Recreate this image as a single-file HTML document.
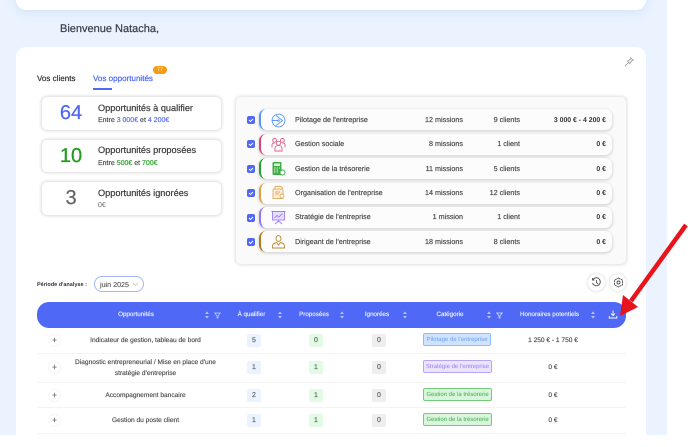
<!DOCTYPE html>
<html lang="fr"><head><meta charset="utf-8"><title>Opportunités</title>
<style>
*{box-sizing:border-box}
html,body{margin:0;padding:0;width:688px;height:435px;overflow:hidden;background:#fff;font-family:"Liberation Sans",sans-serif;color:#444;text-rendering:geometricPrecision}
.a{position:absolute}
.t{position:absolute;white-space:nowrap}
.c{transform:translateX(-50%);text-align:center}
.r{transform:translateX(-100%)}
#bg{left:0;top:0;width:667px;height:435px;background:#eaf3ff}
.stat{position:absolute;left:42px;width:179px;background:#fff;border-radius:5px;box-shadow:0 0 3px 1px rgba(0,0,0,.14)}
.row{position:absolute;left:259px;width:353px;height:21px;background:#fcfcfc;border-radius:7px;box-shadow:0 1px 2px 1px rgba(0,0,0,.12)}
.bar{position:absolute;left:259px;width:8px;height:21px;border-left:2px solid;border-radius:7px 0 0 7px}
.cb{position:absolute;left:247px;width:8px;height:8px;background:#4f68f5;border-radius:2px}
.cb svg{position:absolute;left:0;top:0}
.rt{font-size:7.2px;color:#4a4a4a;-webkit-text-stroke:.18px #4a4a4a}
.rb{font-size:6.9px;font-weight:bold;color:#333;margin-top:1px}
.hd{font-size:6.24px;color:#eef1ff;-webkit-text-stroke:.15px #eef1ff}
.cell{font-size:6.6px;color:#4a4a4a;-webkit-text-stroke:.15px #4a4a4a}
.pill{position:absolute;width:14px;height:13px;border-radius:2px;font-size:7px;text-align:center;line-height:13px;color:#666;-webkit-text-stroke:.2px #666}
.tag{position:absolute;height:13px;border:1px solid;border-radius:2px;font-size:6px;line-height:13px;text-align:center;white-space:nowrap}
.line{position:absolute;left:37px;width:589px;height:1px;background:#f3f3f3}
.plus{position:absolute;left:49px;width:11px;height:11px;border-radius:50%;background:#fff;box-shadow:0 0 2px rgba(0,0,0,.12);font-size:9px;line-height:10px;text-align:center;color:#555}
.h{font-size:9.2px;line-height:12px;color:#3a3a3a;-webkit-text-stroke:.2px #3a3a3a}
.s{font-size:7px;line-height:9px;color:#444;-webkit-text-stroke:.15px #444}
</style></head><body>
<div class="a" id="bg"></div>
<div class="a" style="left:16px;top:-20px;width:630px;height:30px;background:#fff;border-radius:10px;box-shadow:0 3px 10px rgba(150,180,230,.25)"></div>
<div class="t" style="left:60px;top:22px;font-size:11px;color:#3d4350;line-height:14px;-webkit-text-stroke:.25px #3d4350">Bienvenue Natacha,</div>
<div class="a" style="left:16px;top:47px;width:630px;height:400px;background:#fff;border-radius:10px"></div>

<div class="t" style="left:37px;top:73px;font-size:8.05px;line-height:11px;color:#333;-webkit-text-stroke:.2px #333">Vos clients</div>
<div class="t" style="left:93px;top:73px;font-size:8.05px;line-height:11px;color:#4f68f5;-webkit-text-stroke:.2px #4f68f5">Vos opportunités</div>
<div class="a" style="left:93px;top:88px;width:19px;height:1.5px;background:#4f68f5"></div>
<div class="a" style="left:153px;top:66px;width:14px;height:8px;background:#f59a12;border-radius:4px;color:#fff;font-size:5.5px;line-height:8px;text-align:center">77</div>
<svg class="a" style="left:624px;top:56px" width="11" height="11" viewBox="0 0 11 11" fill="none" stroke="#8a8a8a" stroke-width=".7"><path d="M1 10L4.400 6.600M3 4.600L6.400 8M4 5L7 2.600M6 7L8.400 4M6.200 1.400L9.600 4.800"/></svg>

<div class="stat" style="top:97px;height:33px"></div>
<div class="stat" style="top:140px;height:32px"></div>
<div class="stat" style="top:182px;height:33px"></div>
<div class="t c" style="left:71px;top:101px;font-size:20px;line-height:25px;color:#4f68f5;-webkit-text-stroke:.25px #4f68f5">64</div>
<div class="t c" style="left:71px;top:144px;font-size:20px;line-height:25px;color:#1f9c1f;-webkit-text-stroke:.25px #1f9c1f">10</div>
<div class="t c" style="left:71px;top:186px;font-size:20px;line-height:25px;color:#666;-webkit-text-stroke:.25px #666">3</div>
<div class="t h" style="left:98px;top:102px">Opportunités à qualifier</div>
<div class="t s" style="left:98px;top:116px">Entre <span style="color:#4f68f5;-webkit-text-stroke-color:#4f68f5">3 000€</span> et <span style="color:#4f68f5;-webkit-text-stroke-color:#4f68f5">4 200€</span></div>
<div class="t h" style="left:98px;top:144px">Opportunités proposées</div>
<div class="t s" style="left:98px;top:159px">Entre <span style="color:#1f9c1f;-webkit-text-stroke-color:#1f9c1f">500€</span> et <span style="color:#1f9c1f;-webkit-text-stroke-color:#1f9c1f">700€</span></div>
<div class="t h" style="left:98px;top:187px">Opportunités ignorées</div>
<div class="t s" style="left:98px;top:201px;color:#666;-webkit-text-stroke:0">0€</div>

<div class="a" style="left:236px;top:97px;width:390px;height:167px;background:#fafafa;border-radius:5px;box-shadow:0 0 3px 1px rgba(0,0,0,.13)"></div>

<div class="row" style="top:109px"></div><div class="bar" style="top:109px;border-color:#5b97f5"></div>
<div class="row" style="top:134px"></div><div class="bar" style="top:134px;border-color:#d8457c"></div>
<div class="row" style="top:158px"></div><div class="bar" style="top:158px;border-color:#1fa52b"></div>
<div class="row" style="top:183px"></div><div class="bar" style="top:183px;border-color:#e0a044"></div>
<div class="row" style="top:207px"></div><div class="bar" style="top:207px;border-color:#9274f5"></div>
<div class="row" style="top:231px"></div><div class="bar" style="top:231px;border-color:#b57a1f"></div>

<div class="cb" style="top:116px"><svg width="8" height="8"><path d="M2 4l1.500 1.500L6 3" fill="none" stroke="#fff" stroke-width="1"/></svg></div>
<div class="cb" style="top:140px"><svg width="8" height="8"><path d="M2 4l1.500 1.500L6 3" fill="none" stroke="#fff" stroke-width="1"/></svg></div>
<div class="cb" style="top:165px"><svg width="8" height="8"><path d="M2 4l1.500 1.500L6 3" fill="none" stroke="#fff" stroke-width="1"/></svg></div>
<div class="cb" style="top:189px"><svg width="8" height="8"><path d="M2 4l1.500 1.500L6 3" fill="none" stroke="#fff" stroke-width="1"/></svg></div>
<div class="cb" style="top:214px"><svg width="8" height="8"><path d="M2 4l1.500 1.500L6 3" fill="none" stroke="#fff" stroke-width="1"/></svg></div>
<div class="cb" style="top:238px"><svg width="8" height="8"><path d="M2 4l1.500 1.500L6 3" fill="none" stroke="#fff" stroke-width="1"/></svg></div>

<svg class="a" style="left:271px;top:113px" width="15" height="15" viewBox="0 0 15 15" fill="none" stroke="#5b97f5" stroke-width=".9"><circle cx="7.500" cy="7.500" r="6.400"/><path d="M5 2.500L11.500 7.500L5 12.500M1.500 7.500H7"/><circle cx="7.500" cy="7.500" r=".8"/></svg>
<svg class="a" style="left:271px;top:137px" width="15" height="15" viewBox="0 0 15 15" fill="none" stroke="#e0608f" stroke-width=".9"><circle cx="3.600" cy="3.400" r="1.900"/><circle cx="11.400" cy="3.400" r="1.900"/><circle cx="7.500" cy="6.200" r="2"/><path d="M1 10.500V8c0-1.200 1-2 2.400-2M14 10.500V8c0-1.200-1-2-2.400-2M4 14V11c0-1.500 1.500-2.600 3.500-2.600S11 9.500 11 11v3z"/></svg>
<svg class="a" style="left:271px;top:161px" width="15" height="15" viewBox="0 0 15 15"><rect x="1.500" y="1" width="9" height="13" rx="1" fill="#3fae48"/><rect x="3" y="2.500" width="6" height="2.500" fill="#d9f2db"/><path d="M3 7h1.500M5.500 7H7M8 7h1M3 9h1.500M5.500 9H7M3 11h1.500M5.500 11H7" stroke="#d9f2db" stroke-width="1"/><circle cx="11.500" cy="11.500" r="2.500" fill="#fff" stroke="#3fae48"/></svg>
<svg class="a" style="left:271px;top:185px" width="15" height="15" viewBox="0 0 15 15" fill="none" stroke="#e3ac63" stroke-width=".9"><path d="M2 5V13.500H12V5a1 1 0 0 0-1-1H3a1 1 0 0 0-1 1z" fill="#fbeedd"/><path d="M4 4V1.500H10L12 3.500"/><path d="M4 7h5M4 9h4"/><circle cx="11" cy="11" r="2" fill="#fff"/></svg>
<svg class="a" style="left:271px;top:210px" width="15" height="15" viewBox="0 0 15 15" fill="none" stroke="#9c80f7" stroke-width=".9"><rect x="1.500" y="1.500" width="12" height="8.500" fill="#e7e0fd"/><path d="M3.500 8L6 5.500L8 7L11.500 3.500M7.500 10V12M7.500 11L4 14M7.500 11L11 14M.5 1.500h14"/></svg>
<svg class="a" style="left:271px;top:234px" width="15" height="15" viewBox="0 0 15 15" fill="none" stroke="#bd8a3c" stroke-width=".95"><path d="M5 4.500a2.500 2.900 0 1 1 5 0a2.500 2.900 0 1 1-5 0z"/><path d="M1.500 14v-2c0-2 2-3 4-3.500L7.500 11L9.500 8.500c2 .5 4 1.500 4 3.500v2z"/></svg>

<div class="t rt" style="left:295px;top:114px;line-height:11px">Pilotage de l'entreprise</div>
<div class="t rt" style="left:295px;top:138px;line-height:11px">Gestion sociale</div>
<div class="t rt" style="left:295px;top:163px;line-height:11px">Gestion de la trésorerie</div>
<div class="t rt" style="left:295px;top:187px;line-height:11px">Organisation de l'entreprise</div>
<div class="t rt" style="left:295px;top:211px;line-height:11px">Stratégie de l'entreprise</div>
<div class="t rt" style="left:295px;top:236px;line-height:11px">Dirigeant de l'entreprise</div>

<div class="t rt r" style="left:463px;top:114px;line-height:11px">12 missions</div>
<div class="t rt r" style="left:463px;top:138px;line-height:11px">8 missions</div>
<div class="t rt r" style="left:463px;top:163px;line-height:11px">11 missions</div>
<div class="t rt r" style="left:463px;top:187px;line-height:11px">14 missions</div>
<div class="t rt r" style="left:463px;top:211px;line-height:11px">1 mission</div>
<div class="t rt r" style="left:463px;top:236px;line-height:11px">18 missions</div>

<div class="t rt r" style="left:520px;top:114px;line-height:11px">9 clients</div>
<div class="t rt r" style="left:520px;top:138px;line-height:11px">1 client</div>
<div class="t rt r" style="left:520px;top:163px;line-height:11px">5 clients</div>
<div class="t rt r" style="left:520px;top:187px;line-height:11px">12 clients</div>
<div class="t rt r" style="left:520px;top:211px;line-height:11px">1 client</div>
<div class="t rt r" style="left:520px;top:236px;line-height:11px">8 clients</div>

<div class="t r rb" style="left:606px;top:114px;line-height:11px">3 000 € - 4 200 €</div>
<div class="t r rb" style="left:606px;top:138px;line-height:11px">0 €</div>
<div class="t r rb" style="left:606px;top:163px;line-height:11px">0 €</div>
<div class="t r rb" style="left:606px;top:187px;line-height:11px">0 €</div>
<div class="t r rb" style="left:606px;top:211px;line-height:11px">0 €</div>
<div class="t r rb" style="left:606px;top:236px;line-height:11px">0 €</div>

<div class="t" style="left:37px;top:280px;font-size:5.5px;line-height:10px;color:#333;font-weight:bold">Période d'analyse :</div>
<div class="a" style="left:94px;top:276px;width:50px;height:16px;border:1px solid #a8b4fa;border-radius:8px;background:#fff"></div>
<div class="t" style="left:100px;top:280px;font-size:7.15px;line-height:10px;color:#555;-webkit-text-stroke:.12px #555">juin 2025</div>
<svg class="a" style="left:132px;top:282px" width="7" height="5" fill="none" stroke="#bbb" stroke-width=".7"><path d="M1 1l2.500 2.500L6 1"/></svg>

<div class="a" style="left:588px;top:274px;width:17px;height:17px;border-radius:50%;background:#fff;box-shadow:0 0 2px 1px rgba(0,0,0,.1)"></div>
<svg class="a" style="left:591px;top:277px" width="11" height="11" viewBox="0 0 11 11" fill="none" stroke="#555" stroke-width=".9"><path d="M2 2.500A4 4 0 1 1 1.500 6M1.500 1v2h2M5.500 3v2.700L7.200 7"/></svg>
<div class="a" style="left:610px;top:274px;width:16px;height:17px;border-radius:50%;background:#fff;box-shadow:0 0 2px 1px rgba(0,0,0,.1)"></div>
<svg class="a" style="left:613px;top:277px" width="11" height="11" viewBox="0 0 11 11" fill="none" stroke="#555" stroke-width=".9"><path d="M5.500 1L9.500 3.200V7.800L5.500 10L1.500 7.800V3.200z" stroke-linejoin="round" stroke-dasharray="2.200 .4"/><circle cx="5.500" cy="5.500" r="1.500"/></svg>

<div class="a" style="left:37px;top:302px;width:589px;height:26px;background:#4f68f5;border-radius:12px"></div>
<div class="t hd c" style="left:136px;top:309px;line-height:11px">Opportunités</div>
<div class="t hd c" style="left:251.500px;top:309px;line-height:11px">À qualifier</div>
<div class="t hd c" style="left:314px;top:309px;line-height:11px">Proposées</div>
<div class="t hd c" style="left:377px;top:309px;line-height:11px">Ignorées</div>
<div class="t hd c" style="left:450px;top:309px;line-height:11px">Catégorie</div>
<div class="t hd c" style="left:549.500px;top:309px;line-height:11px">Honoraires potentiels</div>

<svg class="a" style="left:204px;top:311px" width="6" height="8" fill="#b8c4fb"><path d="M3 .5L5 3H1zM3 7.500L1 5H5z"/></svg>
<svg class="a" style="left:277px;top:311px" width="6" height="8" fill="#b8c4fb"><path d="M3 .5L5 3H1zM3 7.500L1 5H5z"/></svg>
<svg class="a" style="left:339px;top:311px" width="6" height="8" fill="#b8c4fb"><path d="M3 .5L5 3H1zM3 7.500L1 5H5z"/></svg>
<svg class="a" style="left:402px;top:311px" width="6" height="8" fill="#b8c4fb"><path d="M3 .5L5 3H1zM3 7.500L1 5H5z"/></svg>
<svg class="a" style="left:486px;top:311px" width="6" height="8" fill="#b8c4fb"><path d="M3 .5L5 3H1zM3 7.500L1 5H5z"/></svg>
<svg class="a" style="left:590px;top:311px" width="6" height="8" fill="#b8c4fb"><path d="M3 .5L5 3H1zM3 7.500L1 5H5z"/></svg>
<svg class="a" style="left:214px;top:312px" width="7" height="7" fill="none" stroke="#c9d2fc" stroke-width=".7"><path d="M.7 1H6.300L4 3.800V6H3V3.800z"/></svg>
<svg class="a" style="left:496px;top:312px" width="7" height="7" fill="none" stroke="#dfe4fd" stroke-width=".7"><path d="M.7 1H6.300L4 3.800V6H3V3.800z"/></svg>
<svg class="a" style="left:608px;top:310px" width="10" height="9" fill="none" stroke="#fff" stroke-width=".9"><path d="M5 .5V5.500M3 3.500L5 5.700L7 3.500M1.200 6V8H8.800V6"/></svg>

<div class="line" style="top:353px"></div>
<div class="line" style="top:382px"></div>
<div class="line" style="top:407px"></div>
<div class="line" style="top:433px"></div>

<div class="plus" style="top:335px">+</div>
<div class="plus" style="top:362px">+</div>
<div class="plus" style="top:390px">+</div>
<div class="plus" style="top:415px">+</div>

<div class="t cell c" style="left:145.500px;top:335px;line-height:11px">Indicateur de gestion, tableau de bord</div>
<div class="t cell c" style="left:145.500px;top:357px;line-height:11px">Diagnostic entrepreneurial / Mise en place d'une</div>
<div class="t cell c" style="left:145.500px;top:368px;line-height:11px">stratégie d'entreprise</div>
<div class="t cell c" style="left:145.500px;top:390px;line-height:11px">Accompagnement bancaire</div>
<div class="t cell c" style="left:145.500px;top:415px;line-height:11px">Gestion du poste client</div>

<div class="pill" style="left:247px;top:334px;background:#eaf3ff">5</div>
<div class="pill" style="left:247px;top:361px;background:#eaf3ff">1</div>
<div class="pill" style="left:247px;top:389px;background:#eaf3ff">2</div>
<div class="pill" style="left:247px;top:414px;background:#eaf3ff">1</div>
<div class="pill" style="left:309px;top:334px;background:#e2fbe4">0</div>
<div class="pill" style="left:309px;top:361px;background:#e2fbe4">1</div>
<div class="pill" style="left:309px;top:389px;background:#e2fbe4">1</div>
<div class="pill" style="left:309px;top:414px;background:#e2fbe4">1</div>
<div class="pill" style="left:372px;top:334px;background:#eee">0</div>
<div class="pill" style="left:372px;top:361px;background:#eee">0</div>
<div class="pill" style="left:372px;top:389px;background:#eee">0</div>
<div class="pill" style="left:372px;top:414px;background:#eee">0</div>

<div class="tag" style="left:423px;top:333px;width:68px;background:#cfe2ff;border-color:#8fbcf9;color:#6ea0ec">Pilotage de l'entreprise</div>
<div class="tag" style="left:423px;top:360px;width:69px;background:#ebe4fe;border-color:#b9a3f6;color:#9a7cf0">Stratégie de l'entreprise</div>
<div class="tag" style="left:423px;top:388px;width:69px;background:#d9f6dc;border-color:#72cc7c;color:#3fa84a">Gestion de la trésorerie</div>
<div class="tag" style="left:423px;top:413px;width:69px;background:#d9f6dc;border-color:#72cc7c;color:#3fa84a">Gestion de la trésorerie</div>

<div class="t cell c" style="left:553px;top:335px;line-height:11px">1 250 € - 1 750 €</div>
<div class="t cell c" style="left:553px;top:362px;line-height:11px">0 €</div>
<div class="t cell c" style="left:553px;top:390px;line-height:11px">0 €</div>
<div class="t cell c" style="left:553px;top:415px;line-height:11px">0 €</div>

<svg class="a" style="left:610px;top:220px" width="78" height="100" viewBox="0 0 78 100"><path d="M76 5L21 81" stroke="#e8141c" stroke-width="4.500" fill="none"/><path d="M10 96L13 75L28 87z" fill="#e8141c"/></svg>
</body></html>
